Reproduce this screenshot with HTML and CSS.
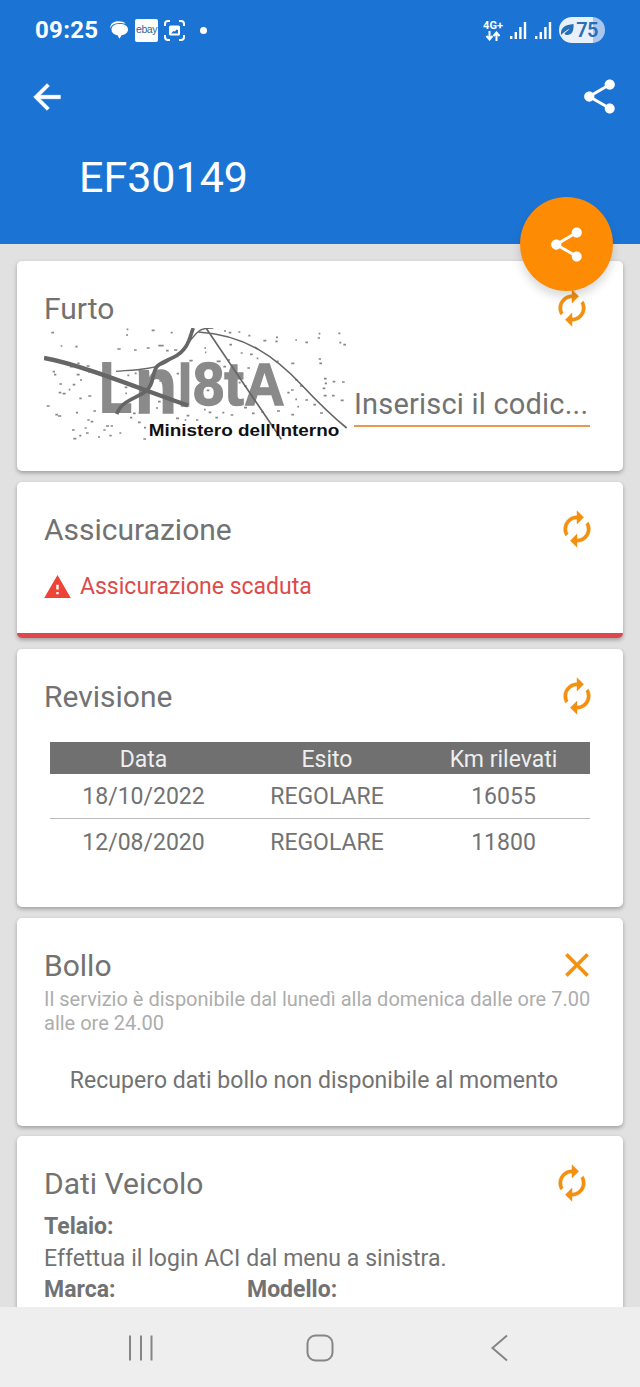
FILE: index.html
```html
<!DOCTYPE html>
<html lang="it">
<head>
    <meta charset="UTF-8">
    <meta name="viewport" content="width=device-width, initial-scale=1.0">
    <title>EF30149</title>
    <link rel="stylesheet" href="styles.css">
</head>
<body>

<!-- Shared icons -->
<svg class="icon-defs">
    <symbol id="renew" viewBox="0 0 24 24"><path d="M12 6v3l4-4-4-4v3c-4.42 0-8 3.58-8 8 0 1.57.46 3.03 1.24 4.26L6.7 14.8c-.45-.83-.7-1.79-.7-2.8 0-3.31 2.69-6 6-6zm6.76 1.74L17.3 9.2c.44.84.7 1.79.7 2.8 0 3.31-2.69 6-6 6v-3l-4 4 4 4v-3c4.42 0 8-3.58 8-8 0-1.57-.46-3.03-1.24-4.26z"/></symbol>
    <symbol id="share" viewBox="0 0 24 24"><path d="M18 16.08c-.76 0-1.44.3-1.96.77L8.91 12.7c.05-.23.09-.46.09-.7s-.04-.47-.09-.7l7.05-4.11c.54.5 1.25.81 2.04.81 1.66 0 3-1.34 3-3s-1.34-3-3-3-3 1.34-3 3c0 .24.04.47.09.7L8.04 9.81C7.5 9.31 6.79 9 6 9c-1.66 0-3 1.34-3 3s1.34 3 3 3c.79 0 1.5-.31 2.04-.81l7.12 4.16c-.05.21-.08.43-.08.65 0 1.61 1.31 2.92 2.92 2.92s2.92-1.31 2.92-2.92-1.31-2.92-2.92-2.92z"/></symbol>
    <symbol id="signal" viewBox="0 0 17 19"><path d="M0 15h2.4v3H0zM4.6 11H7v7H4.6zM9.2 6h2.4v12H9.2zM13.8 1h2.4v17h-2.4z"/></symbol>
</svg>

<header class="app-header">
    <div class="status-bar">
        <span class="clock">09:25</span>
        <svg class="chat" viewBox="0 0 18 18" width="18" height="18"><path d="M.3 7.500C-.3 3 3.500.3 8 .3c3.500 0 6.500.7 7.500 2.500C12.500 1.700 8 1.500 5 2.800 2.500 3.800 1 5 .3 7.500z"/><path d="M1.500 8.700C1.500 5 4.500 3 9.700 3S18 5 18 8.500c0 3-2.500 5-6.500 5.700L9.500 17.800 7.500 14.200C3.500 13.500 1.500 11.700 1.500 8.700z"/></svg>
        <span class="ebay">ebay</span>
        <svg class="capture" viewBox="0 0 21 21" width="21" height="21"><path class="frame" d="M1 6V4a3 3 0 0 1 3-3h2M15 1h2a3 3 0 0 1 3 3v2M20 15v2a3 3 0 0 1-3 3h-2M6 20H4a3 3 0 0 1-3-3v-2"/><path fill-rule="evenodd" d="M6.500 5.500h8q1.500 0 1.500 1.500v7q0 1.500-1.500 1.500h-8Q5 15.500 5 14V7q0-1.500 1.500-1.500zM7 13.500h7V10L12.500 9.500 11 11.500 9.500 11z"/></svg>
        <span class="dot"></span>
        <div class="network">
            <span class="network-type">4G+</span>
            <svg viewBox="0 0 16 10" width="16" height="10"><path d="M4.500 0v8M1.500 5l3 3.500 3-3.500M11.500 10V1.500M8.500 5l3-3.500 3 3.500"/></svg>
        </div>
        <svg class="signal" width="17" height="19"><use href="#signal"/></svg>
        <svg class="signal second" width="17" height="19"><use href="#signal"/></svg>
        <div class="battery">
            <svg viewBox="0 0 13 12" width="13" height="12"><path d="M0 11C-.5 5 2 1 12.500 0c.5 6-1 10.500-5.500 11-2 0-3-.5-3.500-1.500C5 8 7 6.500 8.500 4.500 6 6 3 8 0 11z"/></svg>
            <span>75</span>
        </div>
    </div>
    <div class="toolbar">
        <svg class="back" viewBox="0 0 24 24" width="40" height="40"><path d="M20 11H7.830l5.590-5.590L12 4l-8 8 8 8 1.410-1.410L7.830 13H20v-2z"/></svg>
        <svg class="toolbar-share" width="41" height="41"><use href="#share"/></svg>
    </div>
    <h1>EF30149</h1>
    <div class="fab"><svg width="41" height="41"><use href="#share"/></svg></div>
</header>

<main>
    <section class="card furto">
        <div class="card-head inset">
            <h2>Furto</h2>
            <svg class="icon" width="40" height="40"><use href="#renew"/></svg>
        </div>
        <div class="captcha-row">
            <svg class="captcha" viewBox="42 54 912 342" width="304" height="114">
                <!-- background noise -->
                <path class="noise" d="M64 68h8M288 75h6M290 58h5M365 61h9M422 68h6M582 63h6M596 68h8M625 66h6M655 77h6M700 92h9M738 82h6M736 94h7M796 90h5M826 97h8M866 71h5M863 84h7M925 70h6M928 98h6M940 104h8M92 108h5M136 110h7M262 117h10M312 120h8M350 114h9M385 107h16M408 122h8M432 120h10M523 114h5M525 127h4M598 104h8M632 129h6M660 133h8M680 145h5M784 160h9M740 154h6M866 147h7M868 160h8M120 170h8M142 160h7M170 168h9M174 185h6M68 185h7M72 194h7M140 194h9M150 210h6M88 222h8M128 224h8M86 248h8M98 251h9M116 239h5M175 258h9M148 265h7M50 288h9M76 314h8M84 318h10M138 308h6M190 303h8M172 330h7M182 335h8M126 360h8M164 354h6M168 369h8M148 377h6M130 386h9M204 381h6M228 348h9M220 360h7M242 348h7M238 377h7M268 369h6M300 323h7M309 310h8M326 308h6M324 337h8M342 353h6M340 387h8M284 232h8M270 213h5M292 196h6M314 190h6M286 250h5M388 213h8M398 254h7M384 275h8M378 294h6M410 304h8M438 325h9M470 317h8M464 330h5M498 330h7M522 299h5M536 307h8M556 323h8M577 308h6M602 315h8M642 293h9M666 310h8M694 306h7M741 303h9M784 314h8M802 290h5M826 270h8M850 284h8M881 257h9M906 257h8M932 271h9M870 309h9M884 220h7M878 235h8M908 215h8M936 216h8M882 206h8M796 210h7M810 228h8M772 248h7M783 240h8M796 268h5M478 152h10M504 172h7M521 180h6M580 170h8M594 150h6M560 154h12M652 174h8M706 189h8M626 218h6M642 228h8M530 241h8M506 225h7M464 223h8M440 191h7M598 245h8M570 260h8"/>
                <g class="glyphs">
                    <text transform="translate(208 306) scale(1 1.32)" font-size="162">L</text>
                    <text transform="translate(314 308) scale(1 1.16)" font-size="208">n</text>
                    <text transform="translate(443 287) scale(1 1.12)" font-size="158">l</text>
                    <text transform="translate(489 286) scale(1 1.08)" font-size="168">8</text>
                    <text transform="translate(583 286) scale(1.05 1.08)" font-size="168">t</text>
                    <text transform="translate(643 284) scale(1 1.07)" font-size="168">A</text>
                </g>
                <path class="stroke" stroke-width="13" d="M42 144C160 165 350 245 474 286"/>
                <path class="stroke" stroke-width="11" d="M490 54C480 75 478 120 430 142C370 168 378 170 368 205C360 250 330 252 290 276Q270 288 260 312"/>
                <path class="stroke" stroke-width="4" d="M550 54C510 53 505 62 482 90Q455 130 410 157C370 180 300 180 258 184"/>
                <path class="stroke" stroke-width="5" d="M505 66C650 75 740 145 815 225Q890 305 950 354M528 54C590 145 670 265 754 388"/>
                <text class="ministry" x="356" y="377" textLength="572" lengthAdjust="spacingAndGlyphs">Ministero dell'Interno</text>
            </svg>
            <div class="code-field">Inserisci il codic...</div>
        </div>
    </section>

    <section class="card assicurazione">
        <div class="card-head">
            <h2>Assicurazione</h2>
            <svg class="icon" width="40" height="40"><use href="#renew"/></svg>
        </div>
        <div class="alert">
            <svg viewBox="0 0 22 19" width="27" height="23"><path fill-rule="evenodd" d="M0 19h22L11 0 0 19zm12-3h-2v-2h2v2zm0-4h-2V8h2v4z"/></svg>
            <span>Assicurazione scaduta</span>
        </div>
    </section>

    <section class="card revisione">
        <div class="card-head">
            <h2>Revisione</h2>
            <svg class="icon" width="40" height="40"><use href="#renew"/></svg>
        </div>
        <table>
            <thead>
                <tr><th>Data</th><th>Esito</th><th>Km rilevati</th></tr>
            </thead>
            <tbody>
                <tr><td>18/10/2022</td><td>REGOLARE</td><td>16055</td></tr>
                <tr><td>12/08/2020</td><td>REGOLARE</td><td>11800</td></tr>
            </tbody>
        </table>
    </section>

    <section class="card bollo">
        <div class="card-head">
            <h2>Bollo</h2>
            <svg class="icon" viewBox="0 0 24 24" width="40" height="40"><path d="M19 6.410L17.590 5 12 10.590 6.410 5 5 6.410 10.590 12 5 17.590 6.410 19 12 13.410 17.590 19 19 17.590 13.410 12z"/></svg>
        </div>
        <p class="hint">Il servizio è disponibile dal lunedì alla domenica dalle ore 7.00<br>alle ore 24.00</p>
        <p class="notice">Recupero dati bollo non disponibile al momento</p>
    </section>

    <section class="card veicolo">
        <div class="card-head inset">
            <h2>Dati Veicolo</h2>
            <svg class="icon" width="40" height="40"><use href="#renew"/></svg>
        </div>
        <div class="data">
            <b>Telaio:</b>
            <p>Effettua il login ACI dal menu a sinistra.</p>
            <div class="columns"><b>Marca:</b><b>Modello:</b></div>
        </div>
    </section>
</main>

<nav class="nav-bar">
    <svg viewBox="0 0 40 40" width="40" height="40"><path d="M10 8.500v25M21 8.500v25M31.500 8.500v25"/></svg>
    <svg viewBox="0 0 40 40" width="40" height="40"><rect x="7.500" y="8.500" width="25" height="25" rx="8"/></svg>
    <svg viewBox="0 0 40 40" width="40" height="40"><path d="M27 8.500L12.500 21l14.500 12.500"/></svg>
</nav>

</body>
</html>
```

FILE: styles.css
```css
* {
    box-sizing: border-box;
}
body {
    margin: 0;
    width: 640px;
    height: 1387px;
    display: flex;
    flex-direction: column;
    overflow: hidden;
    background-color: #e1e1e1;
    color: #727272;
    font-family: Roboto, sans-serif;
    font-size: 23px;
}
h1, h2, p {
    margin: 0;
    font-weight: 400;
}
svg {
    display: block;
    flex: none;
}
.icon-defs {
    display: none;
}

/* Header */
.app-header {
    position: relative;
    flex: none;
    height: 244px;
    background-color: #1b74d4;
    color: #fff;
    fill: #fff;
}
.status-bar {
    display: flex;
    align-items: center;
    height: 60px;
    padding: 0 35px;
}
.clock {
    width: 75px;
    font-size: 24px;
    font-weight: 700;
    letter-spacing: 0.3px;
}
.ebay {
    width: 23px;
    height: 23px;
    margin: 0 6px 0 7px;
    border-radius: 2px;
    background-color: #fff;
    color: #33658f;
    font: 10.5px/20px "Liberation Sans", sans-serif;
    letter-spacing: -0.5px;
    text-align: center;
}
.frame {
    fill: none;
    stroke: #fff;
    stroke-width: 2;
}
.dot {
    width: 7px;
    height: 7px;
    margin-left: 15px;
    border-radius: 50%;
    background-color: #fff;
}
.network {
    display: flex;
    flex-direction: column;
    align-items: center;
    width: 22px;
    margin-left: auto;
    font: 700 11px/11px Roboto, sans-serif;
}
.network svg path {
    fill: none;
    stroke: #fff;
    stroke-width: 2;
}
.signal {
    margin-left: 6px;
}
.second {
    margin-left: 8px;
}
.battery {
    display: flex;
    align-items: center;
    justify-content: center;
    gap: 2px;
    width: 46px;
    height: 26px;
    margin-left: 7px;
    border-radius: 13px;
    background: linear-gradient(to right, #e8f0fa 75%, #a9c7ed 75%);
    color: #266fb9;
    fill: #266fb9;
    font-size: 20px;
    line-height: 26px;
    font-weight: 600;
    letter-spacing: -0.7px;
    padding-right: 5px;
}
.toolbar {
    display: flex;
    align-items: center;
    justify-content: space-between;
    height: 73px;
    padding: 0 20px 0 27px;
}
.back path {
    stroke: #fff;
    stroke-width: 0.4;
}
.app-header h1 {
    padding-left: 79px;
    margin-top: 18px;
    font-size: 43px;
    line-height: 52px;
}
.fab {
    position: absolute;
    z-index: 2;
    left: 520px;
    top: 197px;
    width: 93px;
    height: 94px;
    display: flex;
    align-items: center;
    justify-content: center;
    border-radius: 50%;
    background-color: #fd8c04;
    box-shadow: 0 6px 10px rgba(0, 0, 0, 0.15);
}

/* Cards */
main {
    flex: 1;
    min-height: 0;
    overflow: hidden;
    display: flex;
    flex-direction: column;
    gap: 11px;
    padding: 17px 17px 0;
}
.card {
    flex: none;
    padding: 26px 27px 0;
    border-radius: 5px;
    background-color: #fff;
    box-shadow: 0 2px 4px rgba(0, 0, 0, 0.3);
}
.card-head {
    display: flex;
    align-items: center;
    justify-content: space-between;
    height: 42px;
    margin-right: -1px;
}
.card-head.inset {
    margin-right: 4px;
}
h2 {
    padding-top: 2px;
    font-size: 30px;
    line-height: 42px;
}
.icon {
    fill: #f39010;
    stroke: #f39010;
    stroke-width: 0.25;
}
.furto {
    height: 210px;
}
.captcha-row {
    display: flex;
    gap: 6px;
}
.captcha {
    margin-top: -1px;
}
.noise {
    fill: none;
    stroke: #888;
    stroke-width: 5;
}
.glyphs {
    fill: #8a8a8a;
    stroke: #8a8a8a;
    stroke-width: 4;
    font-family: "Liberation Sans", sans-serif;
    font-weight: 700;
}
.stroke {
    fill: none;
    stroke: #666;
}
.ministry {
    fill: #111;
    font: 700 49px "Liberation Sans", sans-serif;
}
.code-field {
    width: 236px;
    height: 98px;
    padding-top: 54px;
    border-bottom: 2px solid #e49a4a;
    font-size: 29px;
    line-height: 42px;
    letter-spacing: 0.2px;
    white-space: nowrap;
}
.assicurazione {
    height: 156px;
    border-bottom: 5px solid #e0474c;
}
.alert {
    display: flex;
    align-items: center;
    gap: 9px;
    height: 30px;
    margin: 21px 0 0;
    color: #dc4b4a;
    fill: #ee4438;
    font-size: 23px;
}
.revisione {
    height: 258px;
}
table {
    width: 540px;
    margin: 25px 0 0 6px;
    border-collapse: collapse;
    table-layout: fixed;
    text-align: center;
}
th {
    height: 32px;
    padding: 2px 0 0;
    background-color: #707070;
    color: #eee;
    font-weight: 400;
}
th:nth-child(1) {
    width: 187px;
}
th:nth-child(2) {
    width: 180px;
}
td {
    height: 46px;
    padding: 2px 0 0;
}
tbody tr:first-child td {
    height: 44px;
    border-bottom: 1px solid #bbb;
}
.bollo {
    height: 208px;
}
.hint {
    margin-top: 1px;
    color: #adadad;
    font-size: 20px;
    line-height: 24px;
    white-space: nowrap;
}
.notice {
    margin-top: 31px;
    padding-right: 12px;
    line-height: 30px;
    text-align: center;
    letter-spacing: 0.04px;
}
.veicolo {
    height: 300px;
    margin-top: -1px;
}
.data {
    padding-top: 7px;
    line-height: 31.5px;
}
.data p {
    letter-spacing: 0.05px;
}
.data b {
    display: block;
}
.columns {
    display: grid;
    grid-template-columns: 203px 1fr;
}

/* System navigation */
.nav-bar {
    display: grid;
    grid-template-columns: repeat(3, 40px);
    justify-content: center;
    gap: 140px;
    flex: none;
    height: 80px;
    padding-top: 20px;
    background-color: #eee;
    fill: none;
    stroke: #858585;
    stroke-width: 2;
}
```
